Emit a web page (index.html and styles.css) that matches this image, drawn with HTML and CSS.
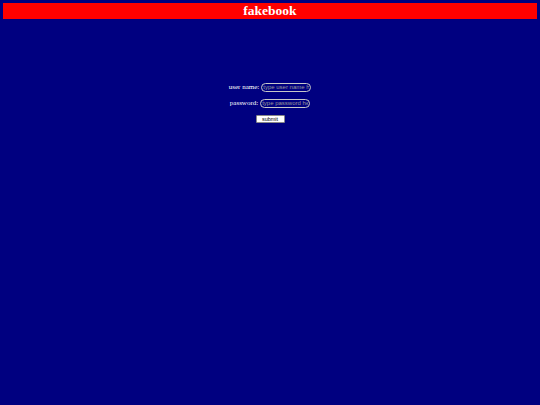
FILE: index.html
```html
<!DOCTYPE html>
<html>
<head>
<meta charset="utf-8">
<link rel="stylesheet" href="styles.css">
</head>
<body>
<header class="bar"><h1 class="title">fakebook</h1></header>
<form class="login">
  <div class="row"><label class="lbl">user name:</label><input class="field" type="text" placeholder="type user name here"></div>
  <div class="row"><label class="lbl">password:</label><input class="field" type="password" placeholder="type password here"></div>
  <div class="row"><button class="btn" type="button">submit</button></div>
</form>
</body>
</html>
```
FILE: styles.css
```css
html, body { background: #000080; }
body { margin: 3px; font-family: "Liberation Serif", serif; color: #fff; }
.bar { background: #ff0000; height: 16px; display: flex; align-items: center; justify-content: center; }
.title { margin: 0; font-size: 13.5px; font-weight: bold; line-height: 16px; color: #fff; }
.login { margin-top: 63px; display: flex; flex-direction: column; align-items: center; gap: 6px; }
.row { display: flex; align-items: center; gap: 2px; height: 10px; }
.lbl { font-size: 7px; color: #fff; }
.field { width: 46px; height: 7px; padding: 0 1px; border: 1px solid #c8c8c8; border-radius: 5px; background: #000080; color: #ccc; font-family: "Liberation Sans", sans-serif; font-size: 6px; outline: none; }
.field::placeholder { color: #9a9a9a; }
.btn { margin-top: -1px; width: 29px; height: 8px; padding: 0; border: 1px solid #888; border-radius: 1px; background: #fff; color: #000; font-family: "Liberation Sans", sans-serif; font-size: 5.5px; line-height: 6px; }
```
